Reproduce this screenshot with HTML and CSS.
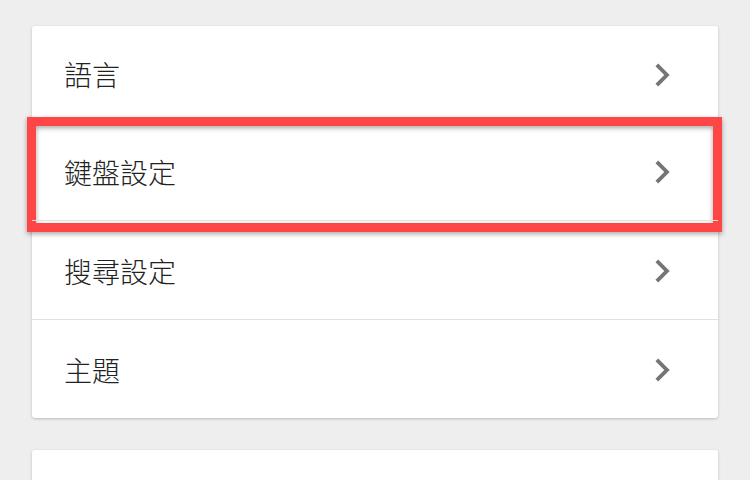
FILE: index.html
```html
<!DOCTYPE html>
<html lang="zh-Hant">
<head>
<meta charset="utf-8">
<link rel="stylesheet" href="styles.css">
</head>
<body>
<div class="page">
  <div class="card">
    <div class="row">
      <span class="label">語言</span>
      <svg class="chev" viewBox="0 0 24 24"><path d="M10 6L8.59 7.41 13.17 12l-4.58 4.59L10 18l6-6z"/></svg>
    </div>
    <div class="row">
      <span class="label">鍵盤設定</span>
      <svg class="chev" viewBox="0 0 24 24"><path d="M10 6L8.59 7.41 13.17 12l-4.58 4.59L10 18l6-6z"/></svg>
      <div class="highlight"></div>
    </div>
    <div class="row">
      <span class="label">搜尋設定</span>
      <svg class="chev" viewBox="0 0 24 24"><path d="M10 6L8.59 7.41 13.17 12l-4.58 4.59L10 18l6-6z"/></svg>
    </div>
    <div class="row">
      <span class="label">主題</span>
      <svg class="chev" viewBox="0 0 24 24"><path d="M10 6L8.59 7.41 13.17 12l-4.58 4.59L10 18l6-6z"/></svg>
    </div>
  </div>
  <div class="card card-next"></div>
</div>
</body>
</html>
```
FILE: styles.css
```css
html, body {
  margin: 0;
  padding: 0;
  background: #eeeeee;
  font-family: "Noto Sans CJK TC", "Noto Sans", sans-serif;
}
.page {
  padding: 26px 32px 0;
  display: flex;
  flex-direction: column;
  gap: 32px;
  height: 480px;
  box-sizing: border-box;
  overflow: hidden;
}
.card {
  background: #ffffff;
  border-radius: 3px;
  box-shadow: 0 1px 3px rgba(0,0,0,0.22);
}
.card-next {
  height: 80px;
  flex: none;
}
.row {
  position: relative;
  height: 98px;
  display: flex;
  align-items: center;
  justify-content: space-between;
  padding: 0 33px 0 32px;
  border-top: 1px solid #e0e0e0;
}
.row:first-child {
  border-top: none;
  height: 95px;
}
.label {
  font-size: 28px;
  font-weight: 300;
  color: #222222;
  line-height: 1;
  padding-top: 1px;
}
.chev {
  width: 46px;
  height: 46px;
  fill: #757575;
  margin-top: 2px;
}
.highlight {
  position: absolute;
  left: -5px;
  top: -5px;
  width: 695px;
  height: 115px;
  box-sizing: border-box;
  border: 9.5px solid #ff4646;
  box-shadow: 0 2px 5px rgba(0,0,0,0.35), inset 0 2px 5px rgba(0,0,0,0.35);
}
```
